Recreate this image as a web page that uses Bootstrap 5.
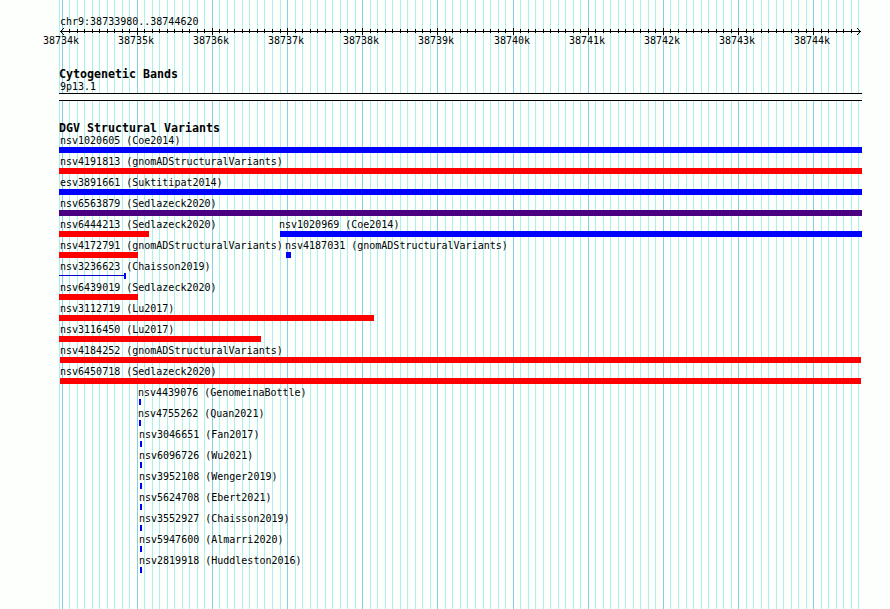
<!DOCTYPE html>
<html lang="en">
<head>
    <meta charset="UTF-8">
    <meta name="viewport" content="width=device-width, initial-scale=1.0">
    <title>chr9:38733980..38744620</title>
    <link href="https://cdn.jsdelivr.net/npm/bootstrap@5.3.0/dist/css/bootstrap.min.css" rel="stylesheet">
    <style>
        body {
            background-color: #fdfffc;
            color: #000;
            font-family: "DejaVu Sans Mono", "Liberation Mono", monospace;
        }
        .browser-panel {
            width: 890px;
            height: 609px;
        }
        .layer {
            grid-area: 1 / 1;
            min-width: 0;
        }
        .browser-panel svg {
            display: block;
            shape-rendering: crispEdges;
        }
        .label {
            font-size: 10px;
            line-height: 17px;
            height: 15px;
            white-space: pre;
        }
        .track-title {
            font-size: 11.63px;
            font-weight: bold;
            line-height: 14px;
            height: 14px;
            margin: 0 0 -3px 59px;
        }
        .region {
            margin: 13px 0 0 60px;
        }
        .ruler-labels {
            height: 15px;
            margin: -4px 0 20px;
        }
        .band-name {
            margin-left: 60px;
        }
        .band {
            width: 803px;
            height: 8px;
            margin: 0 0 20px 59px;
            border-top: 1px solid #000;
            border-bottom: 1px solid #000;
            background-color: #fdfffc;
        }
        .variant-row {
            height: 21px;
        }
        .bar {
            height: 6px;
        }
        .bar-blue { background-color: #0000ff; }
        .bar-red { background-color: #ff0000; }
        .bar-purple { background-color: #4b0082; }
        /* one pixel line that ends in a solid block */
        .bar-thin {
            border-right: 2px solid #0000ff;
            background: linear-gradient(#0000c8, #0000c8) 0 2px / 100% 1px no-repeat;
        }
    </style>
</head>
<body>
    <main class="browser-panel d-grid overflow-hidden">
        <svg class="layer" id="gridLines" width="890" height="609"></svg>

        <div class="layer d-flex flex-column">
            <div class="label region">chr9:38733980..38744620</div>
            <svg id="ruler" class="flex-shrink-0" width="890" height="8"></svg>
            <div class="ruler-labels d-grid" id="rulerLabels"></div>

            <h2 class="track-title">Cytogenetic Bands</h2>
            <div class="label band-name">9p13.1</div>
            <div class="band"></div>

            <h2 class="track-title">DGV Structural Variants</h2>
            <div id="variants"></div>
        </div>
    </main>

    <script src="https://cdn.jsdelivr.net/npm/bootstrap@5.3.0/dist/js/bootstrap.bundle.min.js"></script>
    <script>
        const LEFT = 59;
        const RIGHT = 862;

        // x of the n-th 100 bp tick, counted from 38734000
        function tickX(n) {
            return Math.floor(62.01 + n * 7.518);
        }

        // Each row holds one or more [label, label x, bar x, bar end, colour]
        const rows = [
            [['nsv1020605 (Coe2014)', 60, LEFT, RIGHT, 'blue']],
            [['nsv4191813 (gnomADStructuralVariants)', 60, LEFT, RIGHT, 'red']],
            [['esv3891661 (Suktitipat2014)', 60, LEFT, RIGHT, 'blue']],
            [['nsv6563879 (Sedlazeck2020)', 60, LEFT, RIGHT, 'purple']],
            [['nsv6444213 (Sedlazeck2020)', 60, LEFT, 149, 'red'],
             ['nsv1020969 (Coe2014)', 279, 280, RIGHT, 'blue']],
            [['nsv4172791 (gnomADStructuralVariants)', 60, LEFT, 138, 'red'],
             ['nsv4187031 (gnomADStructuralVariants)', 285, 286, 291, 'blue']],
            [['nsv3236623 (Chaisson2019)', 60, LEFT, 126, 'thin']],
            [['nsv6439019 (Sedlazeck2020)', 60, LEFT, 138, 'red']],
            [['nsv3112719 (Lu2017)', 60, LEFT, 374, 'red']],
            [['nsv3116450 (Lu2017)', 60, LEFT, 261, 'red']],
            [['nsv4184252 (gnomADStructuralVariants)', 60, 60, 861, 'red']],
            [['nsv6450718 (Sedlazeck2020)', 60, 60, 861, 'red']],
            [['nsv4439076 (GenomeinaBottle)', 138, 139, 141, 'blue']],
            [['nsv4755262 (Quan2021)', 138, 139, 141, 'blue']],
            [['nsv3046651 (Fan2017)', 139, 140, 142, 'blue']],
            [['nsv6096726 (Wu2021)', 139, 140, 142, 'blue']],
            [['nsv3952108 (Wenger2019)', 139, 140, 142, 'blue']],
            [['nsv5624708 (Ebert2021)', 139, 140, 142, 'blue']],
            [['nsv3552927 (Chaisson2019)', 139, 140, 142, 'blue']],
            [['nsv5947600 (Almarri2020)', 139, 140, 142, 'blue']],
            [['nsv2819918 (Huddleston2016)', 139, 140, 142, 'blue']]
        ];

        // Vertical guides, ruler ticks and ruler labels
        function drawScale() {
            let lines = `<rect x="${LEFT}" y="0" width="1" height="609" fill="#afeeee"/>`;
            let ticks = '<rect x="60" y="3" width="801" height="1"/>';
            let labels = '';
            for (let n = 0; n <= 106; n++) {
                const x = tickX(n);
                const major = n % 10 === 0;
                lines += `<rect x="${x}" y="0" width="1" height="609" fill="${major ? '#87ceeb' : '#afeeee'}"/>`;
                // the arrow heads take the place of the outermost ticks
                if (n > 0 && n < 106) {
                    ticks += major
                        ? `<rect x="${x}" y="0" width="1" height="7"/>`
                        : `<rect x="${x}" y="1" width="1" height="4"/>`;
                }
                if (major) {
                    labels += `<span class="layer label" style="margin-left: ${x - 19}px">${38734 + n / 10}k</span>`;
                }
            }
            for (let i = 1; i <= 3; i++) {
                for (const y of [3 - i, 3 + i]) {
                    ticks += `<rect x="${60 + i}" y="${y}" width="1" height="1"/>`;
                    ticks += `<rect x="${860 - i}" y="${y}" width="1" height="1"/>`;
                }
            }
            document.getElementById('gridLines').innerHTML = lines;
            document.getElementById('ruler').innerHTML = ticks;
            document.getElementById('rulerLabels').innerHTML = labels;
        }

        function drawVariants() {
            document.getElementById('variants').innerHTML = rows.map(row => `
                <div class="variant-row d-grid">
                    ${row.map(([name, labelX, start, end, color]) => `
                        <div class="layer">
                            <div class="label" style="margin-left: ${labelX}px">${name}</div>
                            <div class="bar bar-${color}" style="margin-left: ${start}px; width: ${end - start}px"></div>
                        </div>`).join('')}
                </div>`).join('');
        }

        drawScale();
        drawVariants();
    </script>
</body>
</html>
